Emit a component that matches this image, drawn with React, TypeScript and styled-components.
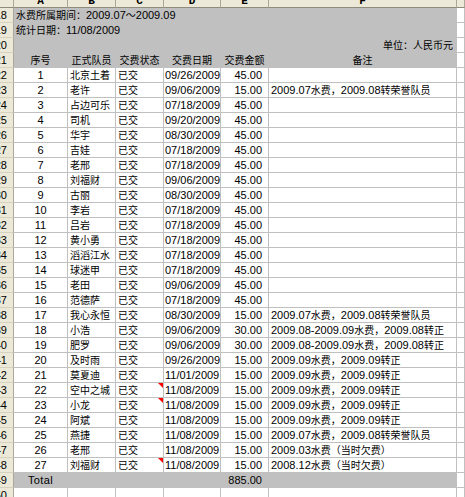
import React from 'react';
import styled, { createGlobalStyle } from 'styled-components';

const GRID = '#C0C0C0';
const GRAY = '#C0C0C0';
const HEAD_BG = '#ECE9D8';

const GlobalStyle = createGlobalStyle`
  html, body { margin: 0; padding: 0; background: #fff; overflow: hidden; }
  body {
    font-family: "Liberation Sans", Arial, "Noto Sans CJK SC", sans-serif;
    font-size: 11px;
    color: #000;
  }
`;

const Sheet = styled.div`
  display: grid;
  grid-template-columns: 14px 54px 48px 48px 57px 48px 188px 1fr;
  grid-template-rows: 8px;
  grid-auto-rows: 15px;
  width: 465px;
  height: 497px;
  overflow: hidden;
`;

const Corner = styled.div`
  background: ${HEAD_BG};
  border-right: 1px solid #aca899;
  border-bottom: 1px solid #8e8c7c;
`;

const ColHead = styled.div`
  background: ${HEAD_BG};
  border-right: 1px solid #aca899;
  border-bottom: 1px solid #8e8c7c;
  overflow: hidden;
  display: flex;
  justify-content: center;
  align-items: flex-end;
  font-family: "Liberation Mono", monospace;
  font-weight: bold;
  font-size: 11px;
  line-height: 11px;
`;

const RowHead = styled.div`
  background: ${HEAD_BG};
  border-right: 1px solid #aca899;
  border-bottom: 1px solid #d6d2c2;
  overflow: hidden;
  display: flex;
  justify-content: flex-end;
  align-items: center;
  padding-right: 6px;
  font-size: 11px;
  line-height: 14px;
  white-space: nowrap;
`;

type Align = 'left' | 'center' | 'right';

const Cell = styled.div<{ $gray?: boolean; $align?: Align; $span?: number; $pl?: number; $pr?: number }>`
  position: relative;
  background: ${(p) => (p.$gray ? GRAY : '#fff')};
  border-right: 1px solid ${GRID};
  border-bottom: 1px solid ${GRID};
  grid-column: ${(p) => (p.$span ? `span ${p.$span}` : 'auto')};
  display: flex;
  align-items: center;
  justify-content: ${(p) => (p.$align === 'center' ? 'center' : p.$align === 'right' ? 'flex-end' : 'flex-start')};
  padding-left: ${(p) => p.$pl ?? 2}px;
  padding-right: ${(p) => p.$pr ?? 2}px;
  white-space: nowrap;
  line-height: 14px;
  min-width: 0;
`;

const TotalLabel = styled.span`
  letter-spacing: 0.4px;
`;

const Cjk = styled.span`
  font-family: "Noto Sans CJK SC", sans-serif;
  font-size: 10px;
`;

const CommentMark = styled.span`
  position: absolute;
  top: 0;
  right: 0;
  width: 0;
  height: 0;
  border-top: 5px solid #ff0000;
  border-left: 5px solid transparent;
`;

const CJK_RE = /([\u3000-\u303f\u4e00-\u9fff\uff00-\uffef]+)/;

const T: React.FC<{ s: string }> = ({ s }) => (
  <>
    {s.split(CJK_RE).map((part, i) =>
      i % 2 === 1 ? <Cjk key={i}>{part}</Cjk> : part ? <React.Fragment key={i}>{part}</React.Fragment> : null
    )}
  </>
);

type Row = { no: number; name: string; date: string; amt: string; note: string; comment?: boolean };

const rows: Row[] = [
  { no: 1, name: '北京土着', date: '09/26/2009', amt: '45.00', note: '' },
  { no: 2, name: '老许', date: '09/06/2009', amt: '15.00', note: '2009.07水费，2009.08转荣誉队员' },
  { no: 3, name: '占边可乐', date: '07/18/2009', amt: '45.00', note: '' },
  { no: 4, name: '司机', date: '09/20/2009', amt: '45.00', note: '' },
  { no: 5, name: '华宇', date: '08/30/2009', amt: '45.00', note: '' },
  { no: 6, name: '吉娃', date: '07/18/2009', amt: '45.00', note: '' },
  { no: 7, name: '老邢', date: '07/18/2009', amt: '45.00', note: '' },
  { no: 8, name: '刘福财', date: '09/06/2009', amt: '45.00', note: '' },
  { no: 9, name: '古丽', date: '08/30/2009', amt: '45.00', note: '' },
  { no: 10, name: '李岩', date: '07/18/2009', amt: '45.00', note: '' },
  { no: 11, name: '吕岩', date: '07/18/2009', amt: '45.00', note: '' },
  { no: 12, name: '黄小勇', date: '07/18/2009', amt: '45.00', note: '' },
  { no: 13, name: '滔滔江水', date: '07/18/2009', amt: '45.00', note: '' },
  { no: 14, name: '球迷甲', date: '07/18/2009', amt: '45.00', note: '' },
  { no: 15, name: '老田', date: '09/06/2009', amt: '45.00', note: '' },
  { no: 16, name: '范德萨', date: '07/18/2009', amt: '45.00', note: '' },
  { no: 17, name: '我心永恒', date: '08/30/2009', amt: '15.00', note: '2009.07水费，2009.08转荣誉队员' },
  { no: 18, name: '小浩', date: '09/06/2009', amt: '30.00', note: '2009.08-2009.09水费，2009.08转正' },
  { no: 19, name: '肥罗', date: '09/06/2009', amt: '30.00', note: '2009.08-2009.09水费，2009.08转正' },
  { no: 20, name: '及时雨', date: '09/26/2009', amt: '15.00', note: '2009.09水费，2009.09转正' },
  { no: 21, name: '莫夏迪', date: '11/01/2009', amt: '15.00', note: '2009.09水费，2009.09转正' },
  { no: 22, name: '空中之城', date: '11/08/2009', amt: '15.00', note: '2009.09水费，2009.09转正', comment: true },
  { no: 23, name: '小龙', date: '11/08/2009', amt: '15.00', note: '2009.09水费，2009.09转正', comment: true },
  { no: 24, name: '阿斌', date: '11/08/2009', amt: '15.00', note: '2009.09水费，2009.09转正' },
  { no: 25, name: '燕捷', date: '11/08/2009', amt: '15.00', note: '2009.07水费，2009.08转荣誉队员' },
  { no: 26, name: '老邢', date: '11/08/2009', amt: '15.00', note: '2009.03水费（当时欠费）' },
  { no: 27, name: '刘福财', date: '11/08/2009', amt: '15.00', note: '2008.12水费（当时欠费）', comment: true },
];

const headers = ['序号', '正式队员', '交费状态', '交费日期', '交费金额', '备注'];
const cols = ['A', 'B', 'C', 'D', 'E', 'F', ''];

export default function App() {
  const firstDataRow = 22;
  return (
    <>
      <GlobalStyle />
      <Sheet>
        <Corner />
        {cols.map((c, i) => (
          <ColHead key={i}>{c}</ColHead>
        ))}

        <RowHead>18</RowHead>
        <Cell $gray $span={6}>
          <T s="水费所属期间：2009.07～2009.09" />
        </Cell>
        <Cell />

        <RowHead>19</RowHead>
        <Cell $gray $span={6}>
          <T s="统计日期：11/08/2009" />
        </Cell>
        <Cell />

        <RowHead>20</RowHead>
        <Cell $gray $span={5} />
        <Cell $gray $align="right" $pr={3}>
          <T s="单位：人民币元" />
        </Cell>
        <Cell />

        <RowHead>21</RowHead>
        {headers.map((h) => (
          <Cell key={h} $gray $align="center">
            <T s={h} />
          </Cell>
        ))}
        <Cell />

        {rows.map((r, i) => (
          <React.Fragment key={r.no}>
            <RowHead>{firstDataRow + i}</RowHead>
            <Cell $align="center">{r.no}</Cell>
            <Cell>
              <T s={r.name} />
            </Cell>
            <Cell>
              <T s="已交" />
              {r.comment && <CommentMark />}
            </Cell>
            <Cell $pl={1}>{r.date}</Cell>
            <Cell $align="right" $pr={6}>
              {r.amt}
            </Cell>
            <Cell>
              <T s={r.note} />
            </Cell>
            <Cell />
          </React.Fragment>
        ))}

        <RowHead>49</RowHead>
        <Cell $gray $align="center">
          <TotalLabel>Total</TotalLabel>
        </Cell>
        <Cell $gray $span={3} />
        <Cell $gray $align="right" $pr={6}>
          885.00
        </Cell>
        <Cell $gray />
        <Cell />

        <RowHead>50</RowHead>
        {cols.map((c, i) => (
          <Cell key={`e${i}`} />
        ))}
      </Sheet>
    </>
  );
}
